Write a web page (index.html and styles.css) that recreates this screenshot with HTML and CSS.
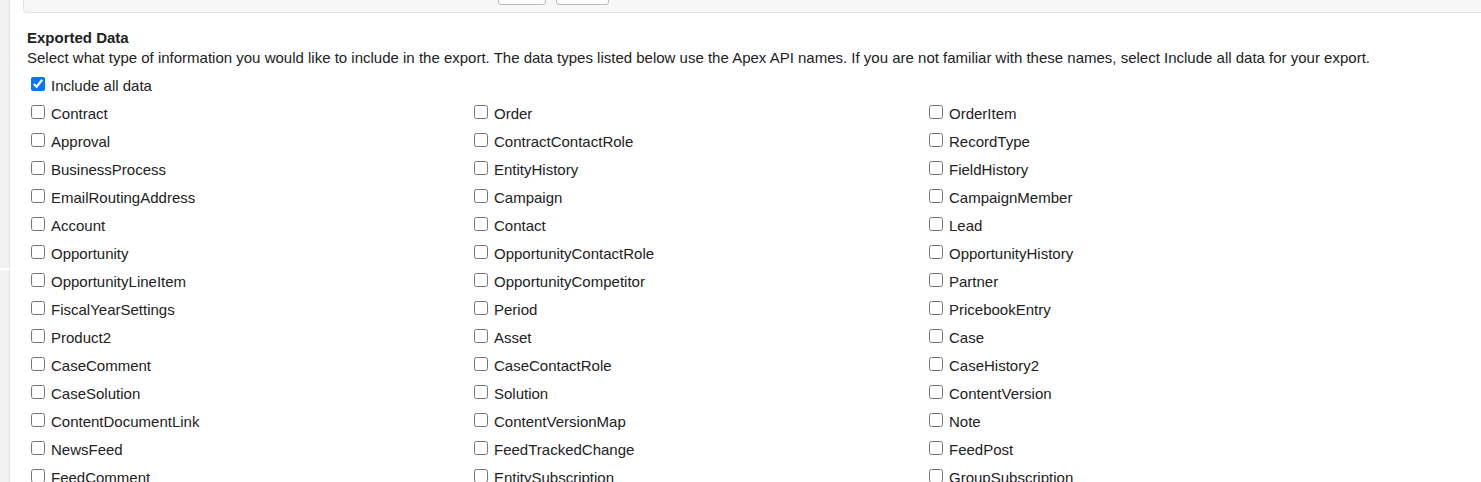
FILE: index.html
```html
<!DOCTYPE html>
<html lang="en">
<head>
  <meta charset="UTF-8" />
  <title>Data Export</title>
  <link rel="stylesheet" href="styles.css">
</head>
<body>
  <div class="page">
    <div class="sidebar">
      <div class="side-block top"></div>
      <div class="side-block"></div>
    </div>
    <div class="main">
      <div class="panel">
        <div class="btn-row">
          <button class="btn">&nbsp;</button>
          <button class="btn wide">&nbsp;</button>
        </div>
      </div>

      <div class="section">
        <h3>Exported Data</h3>
        <p class="desc">Select what type of information you would like to include in the export. The data types listed below use the Apex API names. If you are not familiar with these names, select Include all data for your export.</p>

        <div class="all-row">
          <label><input type="checkbox" checked>Include all data</label>
        </div>

        <div class="types">
          <label><input type="checkbox">Contract</label>
          <label><input type="checkbox">Order</label>
          <label><input type="checkbox">OrderItem</label>

          <label><input type="checkbox">Approval</label>
          <label><input type="checkbox">ContractContactRole</label>
          <label><input type="checkbox">RecordType</label>

          <label><input type="checkbox">BusinessProcess</label>
          <label><input type="checkbox">EntityHistory</label>
          <label><input type="checkbox">FieldHistory</label>

          <label><input type="checkbox">EmailRoutingAddress</label>
          <label><input type="checkbox">Campaign</label>
          <label><input type="checkbox">CampaignMember</label>

          <label><input type="checkbox">Account</label>
          <label><input type="checkbox">Contact</label>
          <label><input type="checkbox">Lead</label>

          <label><input type="checkbox">Opportunity</label>
          <label><input type="checkbox">OpportunityContactRole</label>
          <label><input type="checkbox">OpportunityHistory</label>

          <label><input type="checkbox">OpportunityLineItem</label>
          <label><input type="checkbox">OpportunityCompetitor</label>
          <label><input type="checkbox">Partner</label>

          <label><input type="checkbox">FiscalYearSettings</label>
          <label><input type="checkbox">Period</label>
          <label><input type="checkbox">PricebookEntry</label>

          <label><input type="checkbox">Product2</label>
          <label><input type="checkbox">Asset</label>
          <label><input type="checkbox">Case</label>

          <label><input type="checkbox">CaseComment</label>
          <label><input type="checkbox">CaseContactRole</label>
          <label><input type="checkbox">CaseHistory2</label>

          <label><input type="checkbox">CaseSolution</label>
          <label><input type="checkbox">Solution</label>
          <label><input type="checkbox">ContentVersion</label>

          <label><input type="checkbox">ContentDocumentLink</label>
          <label><input type="checkbox">ContentVersionMap</label>
          <label><input type="checkbox">Note</label>

          <label><input type="checkbox">NewsFeed</label>
          <label><input type="checkbox">FeedTrackedChange</label>
          <label><input type="checkbox">FeedPost</label>

          <label><input type="checkbox">FeedComment</label>
          <label><input type="checkbox">EntitySubscription</label>
          <label><input type="checkbox">GroupSubscription</label>
        </div>
      </div>
    </div>
  </div>
</body>
</html>
```

FILE: styles.css
```css
html, body {
  margin: 0;
  height: 100%;
  overflow: hidden;
}
body {
  background: #fff;
  color: #222;
  font-family: "Liberation Sans", Arial, sans-serif;
  font-size: 15px;
}
.page {
  display: flex;
  min-height: 100%;
}
.sidebar {
  width: 10px;
  flex: none;
  display: flex;
  flex-direction: column;
  gap: 2px;
}
.side-block {
  background: #f2f2f2;
  border-right: 1px solid #e2e2e2;
  flex: 1;
}
.side-block.top {
  flex: none;
  height: 268px;
}
.main {
  flex: 1;
  min-width: 0;
}
.panel {
  margin-left: 13px;
  height: 12px;
  background: #f7f7f7;
  border-left: 1px solid #e3e3e3;
  border-bottom: 1px solid #e3e3e3;
  border-bottom-left-radius: 4px;
  overflow: hidden;
  display: flex;
  align-items: flex-end;
}
.btn-row {
  display: flex;
  gap: 10px;
  padding-left: 474px;
  padding-bottom: 7px;
}
.btn {
  width: 48px;
  height: 24px;
  border: 1px solid #b9b9b9;
  border-radius: 3px;
  background: #fdfdfd;
  flex: none;
}
.btn.wide {
  width: 53px;
}
.section {
  padding-left: 17px;
  padding-top: 15px;
}
h3 {
  margin: 0;
  font-size: 15px;
  font-weight: bold;
  line-height: 19px;
  color: #222;
}
.desc {
  margin: 1px 0 0;
  line-height: 19px;
  white-space: nowrap;
}
.all-row {
  margin-top: 4px;
}
.all-row label,
.types label {
  display: block;
  height: 28px;
  line-height: 29px;
  white-space: nowrap;
}
.types {
  display: grid;
  grid-template-columns: 443px 455px 1fr;
}
input[type="checkbox"] {
  width: 14px;
  height: 14px;
  margin: 3px 6px 5px 4px;
}
```
